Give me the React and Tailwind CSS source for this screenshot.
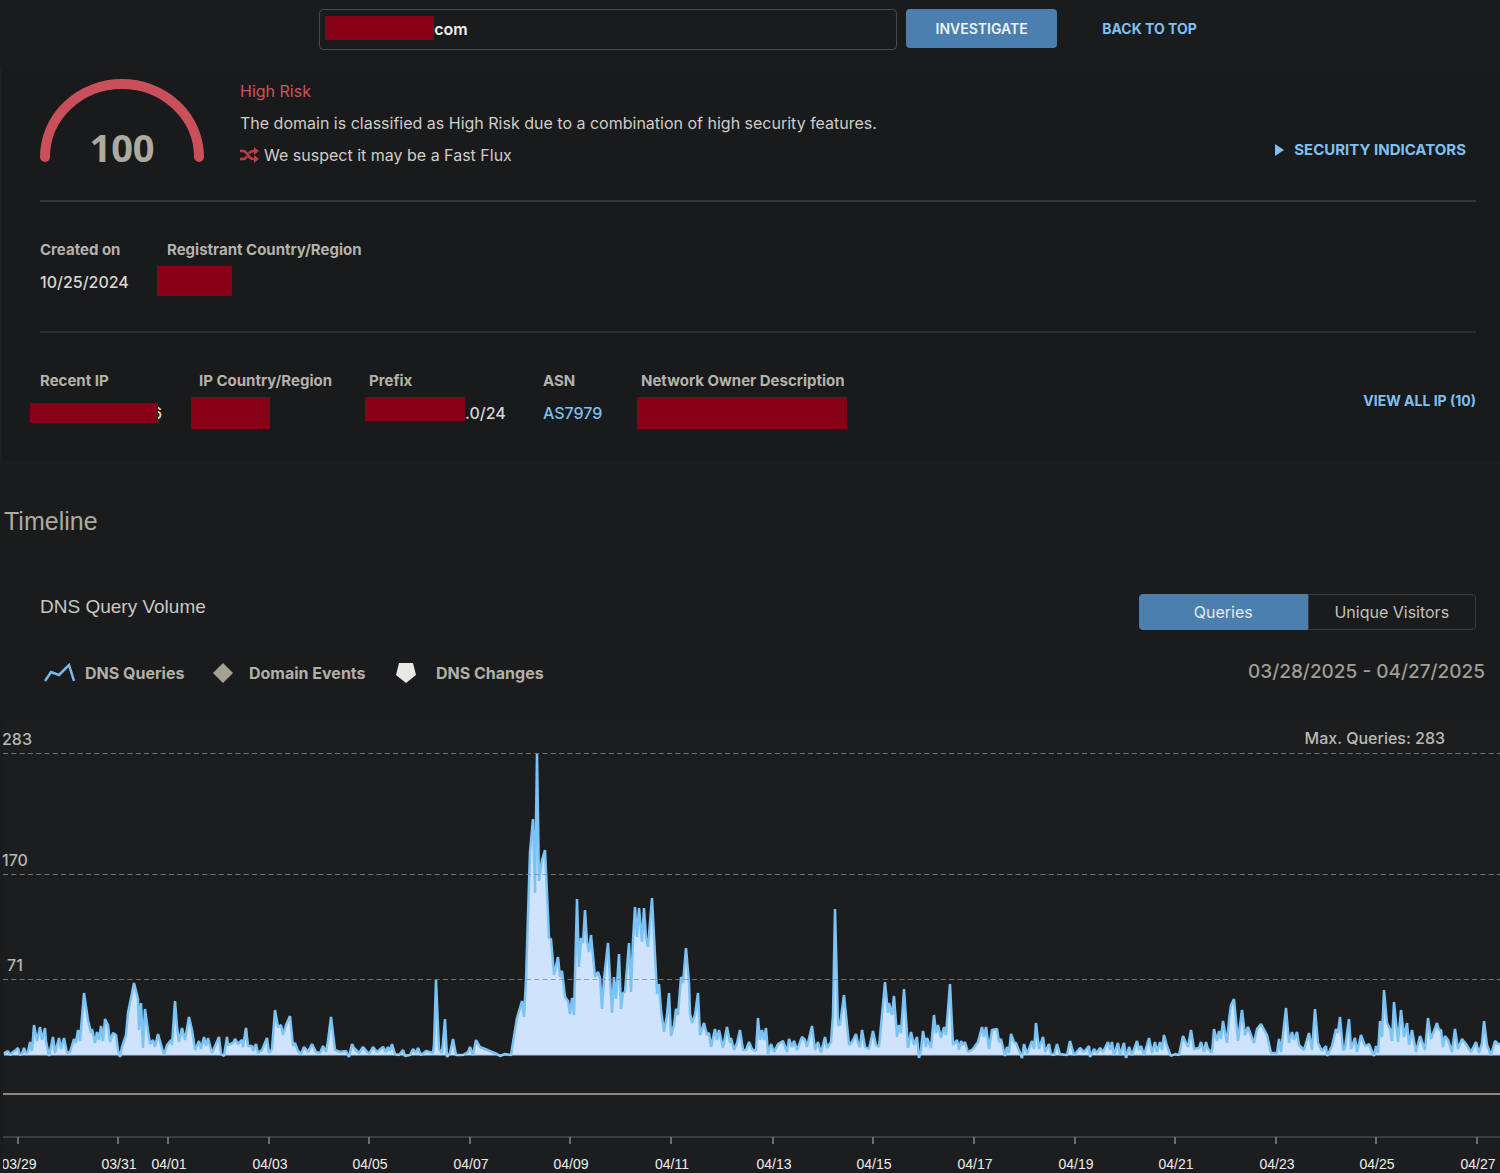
import React, { useState } from 'react';
import clsx from 'clsx';

// [x, height] pairs, height measured up from the baseline
const QUERIES = [
    [4, 1], [6, 3], [8, 4], [10, 0], [13, 3], [16, 5], [18, 7], [20, 0], [22, 1], [24, 7], [26, 2], [28, 3], [30, 13], [32, 4],
    [34, 30], [37, 14], [40, 28], [42, 15], [45, 27], [46, 14], [49, -1], [53, 18], [55, 2], [59, 17], [61, 6], [64, 17], [67, 2],
    [70, 3], [74, 16], [76, 12], [78, 25], [80, 14], [84, 62], [88, 35], [91, 22], [92, 26], [95, 12], [97, 23], [99, 15],
    [101, 29], [103, 14], [105, 36], [108, 30], [110, 13], [113, 22], [116, 20], [118, 5], [120, -2], [122, 8], [126, 20],
    [128, 42], [134, 72], [138, 56], [139, 25], [141, 52], [143, 7], [145, 46], [148, 24], [150, 11], [153, 15], [155, 8],
    [158, 21], [160, 14], [164, 0], [167, 10], [171, 15], [172, 10], [175, 54], [177, 28], [179, 13], [182, 27], [185, 15],
    [189, 38], [192, 25], [195, 5], [199, 14], [201, 6], [204, 18], [206, 9], [208, 17], [212, 2], [219, 18], [221, 1],
    [224, -1], [227, 18], [228, 10], [233, 12], [235, 16], [238, 11], [242, 15], [243, 8], [246, 27], [248, 9], [252, 9],
    [253, 4], [256, 11], [258, 2], [262, 5], [267, 17], [269, 2], [272, 6], [275, 45], [278, 28], [281, 30], [283, 20],
    [286, 30], [290, 39], [293, 9], [295, 12], [298, 4], [301, 1], [304, 8], [308, 3], [312, 11], [316, 3], [320, 2], [323, 9],
    [326, 3], [328, 14], [331, 38], [335, 5], [340, 3], [346, 4], [349, -2], [352, 11], [354, 7], [359, 2], [363, 8], [369, 1],
    [373, 8], [377, 3], [383, 8], [386, 3], [388, 8], [390, 4], [392, 11], [395, 1], [399, 0], [403, 5], [405, -1], [410, 0],
    [413, 6], [416, 2], [418, 7], [421, 0], [426, 4], [433, 2], [434, 10], [436, 75], [439, 6], [442, 2], [445, 36], [447, -2],
    [450, 2], [453, 16], [456, 0], [463, 0], [468, 3], [470, 8], [473, 0], [476, 15], [480, 8], [485, 6], [492, 3], [497, 1],
    [500, -1], [505, 1], [511, 0], [517, 37], [522, 54], [524, 38], [526, 75], [528, 140], [530, 203], [533, 236], [535, 162],
    [537, 301], [539, 174], [542, 195], [545, 205], [548, 140], [549, 117], [551, 116], [554, 80], [558, 98], [560, 78],
    [562, 84], [565, 58], [568, 54], [570, 41], [572, 57], [574, 40], [577, 156], [579, 88], [581, 117], [583, 112], [585, 145],
    [587, 113], [589, 103], [591, 120], [595, 78], [598, 83], [600, 77], [602, 46], [604, 76], [608, 112], [612, 42], [614, 78],
    [616, 56], [619, 101], [621, 46], [623, 62], [625, 63], [629, 112], [631, 63], [633, 115], [635, 148], [637, 118],
    [639, 147], [642, 113], [644, 147], [646, 117], [648, 108], [652, 157], [655, 100], [657, 61], [659, 71], [661, 45],
    [664, 23], [667, 40], [669, 62], [671, 19], [674, 30], [676, 46], [678, 40], [681, 78], [683, 72], [686, 107], [689, 72],
    [690, 42], [692, 32], [695, 40], [698, 62], [700, 20], [704, 32], [707, 20], [709, 22], [711, 8], [715, 26], [717, 15],
    [719, 25], [723, 7], [727, 28], [730, 12], [731, 17], [734, 5], [737, 12], [740, 25], [743, 5], [746, 5], [749, 13],
    [752, 6], [756, 4], [758, 37], [760, 15], [762, 25], [764, 15], [766, 27], [768, 1], [771, 11], [774, 3], [778, 11],
    [783, 14], [787, 3], [789, 16], [792, 8], [794, 14], [797, 5], [802, 18], [805, 15], [807, 8], [812, 29], [815, 5],
    [818, 13], [821, 2], [825, 18], [827, 7], [831, 13], [833, 40], [835, 146], [838, 30], [840, 30], [844, 60], [847, 30],
    [849, 10], [852, 13], [856, 21], [858, 12], [860, 8], [862, 25], [865, 8], [869, 6], [873, 24], [876, 10], [879, 8],
    [882, 40], [885, 73], [888, 42], [889, 52], [892, 40], [894, 59], [897, 18], [899, 30], [901, 22], [904, 66], [908, 7],
    [911, 23], [914, 10], [917, 18], [919, -3], [921, 5], [923, 24], [926, 8], [927, 17], [931, 7], [934, 40], [936, 22],
    [938, 30], [941, 17], [944, 28], [946, 20], [950, 71], [953, 10], [957, 15], [959, 5], [961, 14], [963, 10], [965, 13],
    [968, 3], [973, 6], [978, 13], [982, 28], [984, 18], [986, 28], [989, 6], [992, 25], [997, 26], [999, 13], [1001, 16],
    [1005, -1], [1007, 8], [1009, 2], [1011, 21], [1014, 13], [1016, 12], [1022, -3], [1024, 11], [1027, 1], [1032, 14],
    [1034, 6], [1036, 32], [1039, 6], [1043, 18], [1045, 3], [1049, 11], [1051, 1], [1054, 0], [1057, 11], [1060, 1], [1067, 0],
    [1070, 14], [1074, 0], [1080, 7], [1084, 3], [1089, 9], [1090, -2], [1094, 6], [1097, 2], [1100, 7], [1103, 3], [1108, 13],
    [1110, 5], [1112, 13], [1114, 0], [1118, 12], [1120, 0], [1124, 12], [1126, -3], [1129, 8], [1132, 0], [1137, 14],
    [1139, 5], [1141, 9], [1144, 0], [1149, 17], [1152, 2], [1155, 13], [1157, 3], [1160, 13], [1162, 5], [1164, 20],
    [1167, 9], [1171, -1], [1175, 1], [1179, 0], [1183, 19], [1186, 12], [1188, 8], [1191, 25], [1194, 6], [1199, 7],
    [1201, 13], [1204, 3], [1206, 13], [1208, 6], [1212, 2], [1214, 26], [1217, 14], [1219, 24], [1221, 16], [1223, 34],
    [1227, 12], [1229, 35], [1231, 50], [1234, 56], [1238, 14], [1242, 45], [1245, 20], [1248, 28], [1254, 12], [1257, 26],
    [1261, 31], [1267, 20], [1271, 2], [1277, 2], [1279, 16], [1281, 3], [1286, 47], [1289, 12], [1292, 23], [1294, 15],
    [1297, 23], [1299, 10], [1304, 5], [1309, 22], [1312, 5], [1315, 46], [1318, 12], [1322, 4], [1326, 9], [1327, -1],
    [1332, 9], [1336, 26], [1338, 22], [1340, 38], [1343, 5], [1345, 7], [1349, 36], [1351, 6], [1355, 17], [1357, 3],
    [1361, 20], [1365, 9], [1369, 11], [1374, -1], [1376, 9], [1378, 2], [1380, 34], [1382, 18], [1384, 65], [1387, 32],
    [1390, 26], [1392, 14], [1394, 53], [1398, 13], [1401, 45], [1404, 18], [1407, 32], [1409, 10], [1412, 25], [1416, 3],
    [1420, 19], [1425, 5], [1428, 37], [1431, 16], [1437, 32], [1439, 25], [1441, 25], [1443, 8], [1445, 19], [1448, 15],
    [1452, 3], [1455, 26], [1458, 6], [1462, 16], [1466, 11], [1471, 3], [1476, 13], [1479, 2], [1482, 12], [1484, 34],
    [1487, 10], [1491, 0], [1495, 14], [1498, 11], [1500, 11],
];

const BASELINE = 335;

const GRID_LINES = [
    { label: '283', y: 33.5, x: 2 },
    { label: '170', y: 154.5, x: 2 },
    { label: '71', y: 259.5, x: 7 },
];

const TICKS = [
    { label: '03/29', x: 18 },
    { label: '03/31', x: 118 },
    { label: '04/01', x: 168 },
    { label: '04/03', x: 269 },
    { label: '04/05', x: 369 },
    { label: '04/07', x: 470 },
    { label: '04/09', x: 570 },
    { label: '04/11', x: 671 },
    { label: '04/13', x: 773 },
    { label: '04/15', x: 873 },
    { label: '04/17', x: 974 },
    { label: '04/19', x: 1075 },
    { label: '04/21', x: 1175 },
    { label: '04/23', x: 1276 },
    { label: '04/25', x: 1376 },
    { label: '04/27', x: 1477 },
];

const Redacted = ({ className }) => <span className={clsx('block shrink-0 bg-[#880015]', className)} />;

const Field = ({ label, className, children }) => (
    <div className={clsx('shrink-0', className)}>
        <dt className="text-[15px] leading-8 font-bold text-[#b5b2aa] whitespace-nowrap">{label}</dt>
        <dd className="flex h-8 items-center text-base font-medium text-[#d9d7d3]">{children}</dd>
    </div>
);

const Gauge = ({ score }) => (
    <div className="relative w-[164px] shrink-0">
        <svg viewBox="0 0 164 84" className="block w-full" fill="none">
            <path d="M5 78A77 73 0 0 1 159 78" stroke="#c9505a" strokeWidth="10" strokeLinecap="round" />
        </svg>
        <span className="absolute inset-x-0 bottom-0 text-center font-['Open_Sans',sans-serif] text-[38px] leading-8 font-bold text-[#aeaaa0]">
            {score}
        </span>
    </div>
);

const ShuffleIcon = () => (
    <svg viewBox="0 0 20 16" className="h-4 w-5 shrink-0" fill="none" stroke="#c23b44" strokeWidth="2.500">
        <path d="M0 4H3C8 4 8 12 13 12H16" />
        <path d="M0 12H3C5 12 6 11 7 9.500M9 6.500C10 5 11 4 13 4H16" />
        <path d="M14 0L19 4L14 8ZM14 8L19 12L14 16Z" fill="#c23b44" stroke="none" />
    </svg>
);

const TimelineChart = () => {
    const line = QUERIES.map(([x, h]) => `${x},${BASELINE - h}`).join(' ');

    return (
        <svg viewBox="0 0 1500 453" className="block w-full font-['Inter',sans-serif]">
            <rect x="3" width="1497" height="453" fill="#1c1d1f" />

            <polygon points={`4,${BASELINE} ${line} 1500,${BASELINE}`} fill="#cfe4fc" />
            <polyline points={line} fill="none" stroke="#7cc3f5" strokeWidth="2.500" strokeLinejoin="bevel" />
            <path d={`M4 ${BASELINE}H1500`} stroke="#a9cdec" strokeWidth="1" />

            {GRID_LINES.map((g) => (
                <g key={g.label}>
                    <path d={`M3 ${g.y}H1500`} stroke="#8a8983" strokeOpacity="0.8" strokeDasharray="5 3.300" />
                    <text x={g.x} y={g.y - 9} fontSize="16" fontWeight="500" fill="#b9b6ae">{g.label}</text>
                </g>
            ))}
            <text x="1445" y="24" fontSize="16" fontWeight="500" textAnchor="end" fill="#bdbab3">Max. Queries: 283</text>

            {/* Events track */}
            <path d="M3 374H1500" stroke="#8b8781" strokeWidth="2" />

            {/* Date axis */}
            <path d="M3 417H1500" stroke="#47494b" strokeWidth="1.500" />
            {TICKS.map((t) => (
                <g key={t.label}>
                    <path d={`M${t.x} 417V424`} stroke="#6c6d6f" strokeWidth="2" />
                    <text x={t.x + 1} y="449" fontSize="14" textAnchor="middle" fill="#efedea" className="font-['Liberation_Sans',sans-serif]">
                        {t.label}
                    </text>
                </g>
            ))}

            {/* Gutter hides labels that run past the plot's left edge */}
            <rect y="430" width="3" height="23" fill="#1a1b1d" />
        </svg>
    );
};

const App = () => {
    const [domain, setDomain] = useState('com');
    const [mode, setMode] = useState('Queries');

    return (
        <div className="min-h-screen overflow-x-hidden bg-[#1a1b1d] font-['Inter',sans-serif] text-[#cfcdc8]">
            {/* Search bar */}
            <header className="flex h-[67px] items-start justify-center pt-[9px] pl-4">
                <form className="flex items-start gap-[9px]" onSubmit={(e) => e.preventDefault()}>
                    <div className="relative">
                        <input
                            type="text"
                            aria-label="Domain"
                            value={domain}
                            onChange={(e) => setDomain(e.target.value)}
                            className="h-[41px] w-[578px] rounded border border-[#48494b] bg-transparent pb-0.5 pl-[114px] text-base font-semibold text-[#f0efec] outline-none"
                        />
                        <Redacted className="absolute top-[7px] left-1.5 h-6 w-[109px]" />
                    </div>
                    <button type="submit" className="h-[39px] w-[151px] rounded-sm bg-[#4b7fae] text-sm font-semibold text-[#eef3f8]">
                        INVESTIGATE
                    </button>
                </form>
                <a href="#top" className="ml-[45px] text-sm leading-10 font-bold text-[#7fc0f2]">BACK TO TOP</a>
            </header>

            {/* Risk summary */}
            <section className="h-[396px] border-b border-l-2 border-[#1e1f21] bg-[#191a1c] pr-6 pl-[38px]">
                <div className="flex h-[135px] items-start border-b-2 border-[#343537] pt-2">
                    <div className="pt-1">
                        <Gauge score={100} />
                    </div>
                    <div className="ml-9 text-base leading-8 text-[#cfcdc8]">
                        <p className="text-[#cf525d]">High Risk</p>
                        <p>The domain is classified as High Risk due to a combination of high security features.</p>
                        <p className="flex items-center gap-1">
                            <ShuffleIcon />
                            We suspect it may be a Fast Flux
                        </p>
                    </div>
                    <button type="button" className="mt-[59px] mr-2.5 ml-auto flex items-center gap-2.5 text-[15px] leading-8 font-bold text-[#7fc0f2]">
                        <svg viewBox="0 0 9 12" className="h-3 w-[9px]" fill="#7fc0f2">
                            <path d="M0 0L9 6L0 12Z" />
                        </svg>
                        SECURITY INDICATORS
                    </button>
                </div>

                <dl className="flex h-[131px] border-b-2 border-[#2b2c2e] pt-8">
                    <Field label="Created on" className="w-[127px]">10/25/2024</Field>
                    <Field label="Registrant Country/Region">
                        <Redacted className="-ml-2.5 h-[30px] w-[75px] self-start" />
                    </Field>
                </dl>

                <div className="flex items-start justify-between pt-8">
                    <dl className="flex">
                        <Field label="Recent IP" className="w-[159px]">
                            <Redacted className="z-10 -ml-2.5 h-5 w-[128px]" />
                            <span className="-ml-1.5">6</span>
                        </Field>
                        <Field label="IP Country/Region" className="w-[170px]">
                            <Redacted className="-ml-2 h-8 w-[79px]" />
                        </Field>
                        <Field label="Prefix" className="w-[174px]">
                            <Redacted className="-ml-1 h-6 w-[100px] self-start" />
                            .0/24
                        </Field>
                        <Field label="ASN" className="w-[98px]">
                            <a href="#asn" className="text-[#7fc0f2]">AS7979</a>
                        </Field>
                        <Field label="Network Owner Description">
                            <Redacted className="-ml-1 h-8 w-[210px]" />
                        </Field>
                    </dl>
                    <a href="#all-ip" className="pt-5 text-sm leading-8 font-bold text-[#7fc0f2]">VIEW ALL IP (10)</a>
                </div>
            </section>

            {/* Timeline */}
            <section>
                <h2 className="pt-[42px] pl-1 font-['Liberation_Sans',sans-serif] text-[25px] leading-8 text-[#aeaaa0]">Timeline</h2>

                <div className="flex items-start justify-between pt-[57px] pr-6 pl-10">
                    <h3 className="font-['Liberation_Sans',sans-serif] text-[19px] leading-[26px] text-[#c9c7c2]">DNS Query Volume</h3>
                    <div className="flex h-9 w-[337px]">
                        {['Queries', 'Unique Visitors'].map((name) => (
                            <button
                                key={name}
                                type="button"
                                onClick={() => setMode(name)}
                                className={clsx(
                                    'flex-1 border text-base first:rounded-l-sm last:rounded-r-sm',
                                    mode === name ? 'border-[#4b7fae] bg-[#4b7fae] text-[#e3e9ef]' : 'border-[#3b3c3e] text-[#c4c1ba]'
                                )}
                            >
                                {name}
                            </button>
                        ))}
                    </div>
                </div>

                <div className="flex h-[90px] items-start justify-between pt-[26px] pr-[15px] pl-11">
                    <ul className="flex text-base leading-[34px] font-bold text-[#b2afa6]">
                        <li className="flex w-[169px] items-center gap-2.5">
                            <svg viewBox="0 0 31 20" className="h-5 w-[31px]" fill="none" stroke="#7cb8ec" strokeWidth="2.500">
                                <path d="M1 18L7 9L15 12L25 2L30 18" />
                            </svg>
                            DNS Queries
                        </li>
                        <li className="flex w-[183px] items-center gap-4">
                            <svg viewBox="0 0 20 20" className="size-5" fill="#a5a196">
                                <path d="M10 0L20 10L10 20L0 10Z" />
                            </svg>
                            Domain Events
                        </li>
                        <li className="flex items-center gap-5">
                            <svg viewBox="0 0 20 20" className="size-5" fill="#e9e7e3">
                                <path d="M3 0H17L20 12L10 20L0 12Z" />
                            </svg>
                            DNS Changes
                        </li>
                    </ul>
                    <p className="text-[19px] leading-8 font-medium text-[#a09d93]">03/28/2025 - 04/27/2025</p>
                </div>

                <TimelineChart />
            </section>
        </div>
    );
};

export default App;
